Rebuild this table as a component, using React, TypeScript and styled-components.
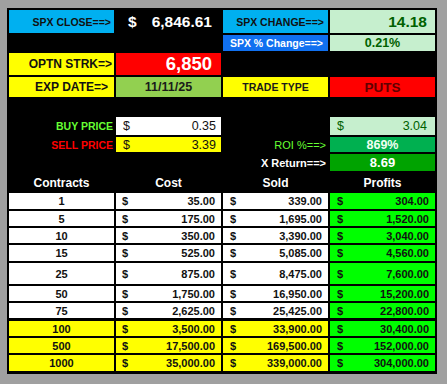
import React from 'react'
import styled, {createGlobalStyle} from 'styled-components'

const GlobalStyle = createGlobalStyle`
  body {
    margin: 0;
    background: #a0a0a0;
    font-family: "Liberation Sans", Arial, sans-serif;
  }
`

const Sheet = styled.div`
  box-sizing: border-box;
  width: 430px;
  height: 366px;
  margin: 8px 0 0 7px;
  padding: 2px;
  background: #000;
  display: flex;
  flex-direction: column;
`

const Grid = styled.div<{ $rows: string; $mt?: number }>`
  display: grid;
  grid-template-columns: repeat(4, 105px);
  grid-template-rows: ${p => p.$rows};
  column-gap: 2px;
  row-gap: 2px;
  margin-top: ${p => p.$mt ?? 0}px;
`

type Align = 'left' | 'center' | 'right' | 'between'

const justify = {left: 'flex-start', center: 'center', right: 'flex-end', between: 'space-between'}

const Cell = styled.div<{
    $bg?: string; $color?: string; $align?: Align; $size?: number; $bold?: boolean; $pad?: string
}>`
  display: flex;
  align-items: center;
  justify-content: ${p => justify[p.$align ?? 'right']};
  background: ${p => p.$bg ?? 'transparent'};
  color: ${p => p.$color ?? '#111'};
  font-size: ${p => p.$size ?? 11}px;
  font-weight: ${p => (p.$bold === false ? 400 : 700)};
  padding: ${p => p.$pad ?? '0 3px'};
  white-space: nowrap;
  overflow: hidden;
`

const Table = styled.div`
  display: flex;
  flex-direction: column;
  gap: 2px;
  margin-top: 1px;
`

const Row = styled(Grid)<{ $h: number }>`
  height: ${p => p.$h}px;
`

const C = {
    blue: '#00b0f0',
    blue2: '#1070f0',
    mint: '#c6efce',
    dark: '#006100',
    yellow: '#ffff00',
    red: '#ff0000',
    olive: '#92d050',
    roi: '#00b050',
    xret: '#00a300',
    lime: '#00ff00',
    label: '#66ff33',
}

const rows = [
    {n: '1', cost: '35.00', sold: '339.00', profit: '304.00', h: 16},
    {n: '5', cost: '175.00', sold: '1,695.00', profit: '1,520.00', h: 15},
    {n: '10', cost: '350.00', sold: '3,390.00', profit: '3,040.00', h: 15},
    {n: '15', cost: '525.00', sold: '5,085.00', profit: '4,560.00', h: 16},
    {n: '25', cost: '875.00', sold: '8,475.00', profit: '7,600.00', h: 21},
    {n: '50', cost: '1,750.00', sold: '16,950.00', profit: '15,200.00', h: 15},
    {n: '75', cost: '2,625.00', sold: '25,425.00', profit: '22,800.00', h: 15},
    {n: '100', cost: '3,500.00', sold: '33,900.00', profit: '30,400.00', h: 15, hi: true, mt: 1},
    {n: '500', cost: '17,500.00', sold: '169,500.00', profit: '152,000.00', h: 15, hi: true},
    {n: '1000', cost: '35,000.00', sold: '339,000.00', profit: '304,000.00', h: 16, hi: true},
]

export default function App() {
    return (
        <>
            <GlobalStyle/>
            <Sheet>
                <Grid $rows="23px 16px 22px 20px">
                    <Cell $bg={C.blue} $size={10.5} $pad="0 3px">SPX CLOSE==&gt;</Cell>
                    <Cell $align="between" $color="#fff" $size={15.5} $pad="0 9px 0 12px">
                        <span>$</span><span>6,846.61</span>
                    </Cell>
                    <Cell $bg={C.blue} $size={10.5} $pad="0 4px">SPX CHANGE==&gt;</Cell>
                    <Cell $bg={C.mint} $color={C.dark} $size={15.5} $pad="0 8px">14.18</Cell>

                    <Cell/>
                    <Cell/>
                    <Cell $bg={C.blue2} $color="#fff" $size={10.5} $pad="0 5px">SPX % Change==&gt;</Cell>
                    <Cell $bg={C.mint} $color={C.dark} $align="center" $size={12.5}>0.21%</Cell>

                    <Cell $bg={C.yellow} $size={12} $pad="0 2px">OPTN STRK=&gt;</Cell>
                    <Cell $bg={C.red} $color="#fff" $size={18.5} $pad="0 9px">6,850</Cell>
                    <Cell/>
                    <Cell/>

                    <Cell $bg={C.yellow} $size={12} $pad="0 6px">EXP DATE=&gt;</Cell>
                    <Cell $bg={C.olive} $color="#1a1a1a" $align="center" $size={12.5}>11/11/25</Cell>
                    <Cell $bg={C.yellow} $color="#1a1a1a" $align="center" $size={10.5}>TRADE TYPE</Cell>
                    <Cell $bg={C.red} $color="#600000" $align="center" $size={13.5}>PUTS</Cell>
                </Grid>

                <Grid $rows="18px 15px 17px" $mt={20}>
                    <Cell $color={C.label} $size={10.5} $pad="0 1px">BUY PRICE</Cell>
                    <Cell $bg="#fff" $align="between" $bold={false} $size={12.5} $pad="0 5px 0 7px">
                        <span>$</span><span>0.35</span>
                    </Cell>
                    <Cell/>
                    <Cell $bg={C.mint} $color={C.dark} $align="between" $bold={false} $size={12.5} $pad="0 8px 0 7px">
                        <span>$</span><span>3.04</span>
                    </Cell>

                    <Cell $color={C.red} $size={10.5} $pad="0 1px">SELL PRICE</Cell>
                    <Cell $bg={C.yellow} $align="between" $bold={false} $size={12.5} $pad="0 5px 0 7px">
                        <span>$</span><span>3.39</span>
                    </Cell>
                    <Cell $color={C.label} $bold={false} $size={11} $pad="0 2px">ROI %==&gt;</Cell>
                    <Cell $bg={C.roi} $color="#f0fff0" $align="center" $size={12.5}>869%</Cell>

                    <Cell/>
                    <Cell/>
                    <Cell $color="#fff" $size={11} $pad="0 2px">X Return==&gt;</Cell>
                    <Cell $bg={C.xret} $color="#fff" $align="center" $size={13}>8.69</Cell>
                </Grid>

                <Grid $rows="19px" $mt={2}>
                    <Cell $color="#fff" $align="center" $size={12}>Contracts</Cell>
                    <Cell $color="#fff" $align="center" $size={12}>Cost</Cell>
                    <Cell $color="#fff" $align="center" $size={12}>Sold</Cell>
                    <Cell $color="#fff" $align="center" $size={12}>Profits</Cell>
                </Grid>

                <Table>
                    {rows.map(r => {
                        const bg = r.hi ? C.yellow : '#fff'
                        return (
                            <Row key={r.n} $rows="1fr" $h={r.h} $mt={r.mt}>
                                <Cell $bg={bg} $align="center" $size={11}>{r.n}</Cell>
                                <Cell $bg={bg} $align="between" $size={11} $pad="0 6px 0 6px">
                                    <span>$</span><span>{r.cost}</span>
                                </Cell>
                                <Cell $bg={bg} $align="between" $size={11} $pad="0 6px 0 7px">
                                    <span>$</span><span>{r.sold}</span>
                                </Cell>
                                <Cell $bg={C.lime} $align="between" $size={11} $pad="0 6px 0 7px">
                                    <span>$</span><span>{r.profit}</span>
                                </Cell>
                            </Row>
                        )
                    })}
                </Table>
            </Sheet>
        </>
    )
}
